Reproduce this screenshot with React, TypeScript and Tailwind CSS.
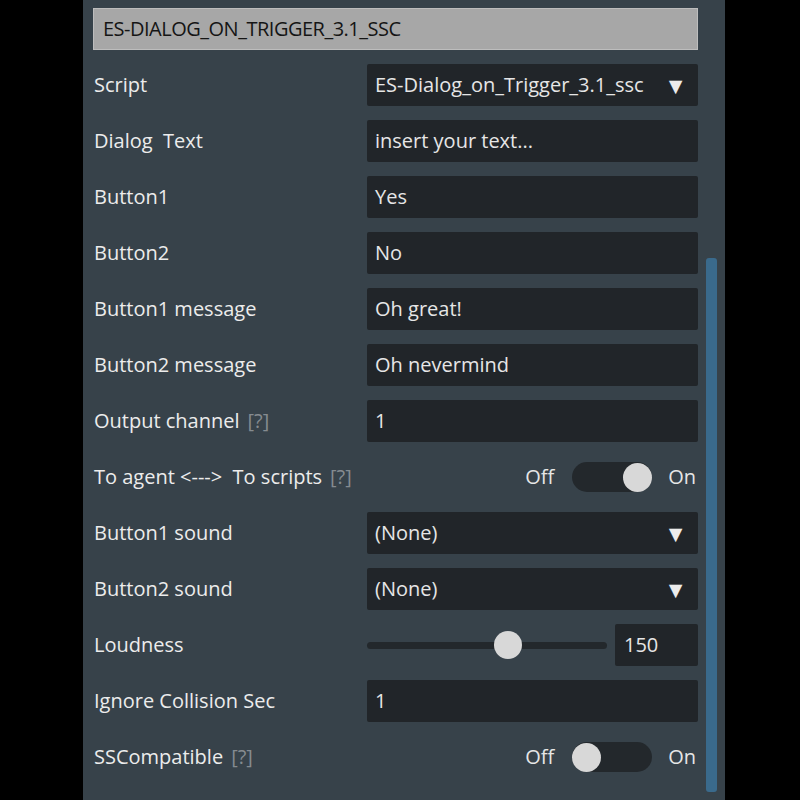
import React from 'react'

const font = { fontFamily: '"Open Sans", Lato, sans-serif' }

function Help() {
  return <span className="ml-2 font-normal text-[#858b90]">[?]</span>
}

function TextBox({ value, arrow }: { value: string; arrow?: boolean }) {
  return (
    <div className="flex h-[42px] items-center justify-between rounded-[2px] bg-[#212529] pl-[8px] pr-[11px] text-[20px] text-[#e6e6e6]">
      <span>{value}</span>
      {arrow && <span className="text-[23px] leading-none text-[#ececec]">▼</span>}
    </div>
  )
}

function Toggle({ on }: { on: boolean }) {
  return (
    <div className="flex h-[42px] items-center justify-end pr-[2px] text-[20px] text-[#e6e6e6]">
      <span>Off</span>
      <div className={`ml-[18px] mr-[16px] flex h-[30px] w-[80px] items-center rounded-full bg-[#23282c] ${on ? 'justify-end' : 'justify-start'}`}>
        <div className="h-[29px] w-[29px] rounded-full bg-[#d8d8d8]" />
      </div>
      <span>On</span>
    </div>
  )
}

function Slider({ value }: { value: number }) {
  return (
    <div className="flex h-[42px] items-center gap-[8px]">
      <div className="relative h-[7px] w-[240px] rounded-full bg-[#23282c]">
        <div className="absolute top-1/2 left-[127px] h-[28px] w-[28px] -translate-y-1/2 rounded-full bg-[#d8d8d8]" />
      </div>
      <div className="flex h-[42px] flex-1 items-center rounded-[2px] bg-[#212529] pl-[9px] text-[20px] text-[#e6e6e6]">{value}</div>
    </div>
  )
}

type Row = { label: React.ReactNode; control: React.ReactNode }

const rows: Row[] = [
  { label: 'Script', control: <TextBox value="ES-Dialog_on_Trigger_3.1_ssc" arrow /> },
  { label: 'Dialog  Text', control: <TextBox value="insert your text..." /> },
  { label: 'Button1', control: <TextBox value="Yes" /> },
  { label: 'Button2', control: <TextBox value="No" /> },
  { label: 'Button1 message', control: <TextBox value="Oh great!" /> },
  { label: 'Button2 message', control: <TextBox value="Oh nevermind" /> },
  { label: <>Output channel<Help /></>, control: <TextBox value="1" /> },
  { label: <>To agent &lt;---&gt;  To scripts<Help /></>, control: <Toggle on /> },
  { label: 'Button1 sound', control: <TextBox value="(None)" arrow /> },
  { label: 'Button2 sound', control: <TextBox value="(None)" arrow /> },
  { label: 'Loudness', control: <Slider value={150} /> },
  { label: 'Ignore Collision Sec', control: <TextBox value="1" /> },
  { label: <>SSCompatible<Help /></>, control: <Toggle on={false} /> },
]

export default function App() {
  return (
    <div className="flex h-[800px] w-[800px] bg-black" style={font}>
      <div className="ml-[83px] flex h-full w-[642px] bg-[#37424a] pl-[10px] pr-[7px]">
        <div className="w-[605px] pt-[8px]">
          <div className="flex h-[42px] items-center border border-[#bdbdbd] bg-[#a7a7a7] pl-[9px] text-[20px] font-medium tracking-[-0.5px] text-[#151515]">
            ES-DIALOG_ON_TRIGGER_3.1_SSC
          </div>
          <div className="mt-[14px] flex flex-col gap-[14px]">
            {rows.map((r, i) => (
              <div key={i} className="grid grid-cols-[274px_331px] items-center">
                <div className="whitespace-pre pl-[1px] text-[20px] font-medium text-[#ececec]">{r.label}</div>
                {r.control}
              </div>
            ))}
          </div>
        </div>
        <div className="ml-[8px] flex w-[11px] flex-col pt-[258px] pb-[8px]">
          <div className="flex-1 rounded-[3px] bg-[#3a6a8c]" />
        </div>
      </div>
    </div>
  )
}
